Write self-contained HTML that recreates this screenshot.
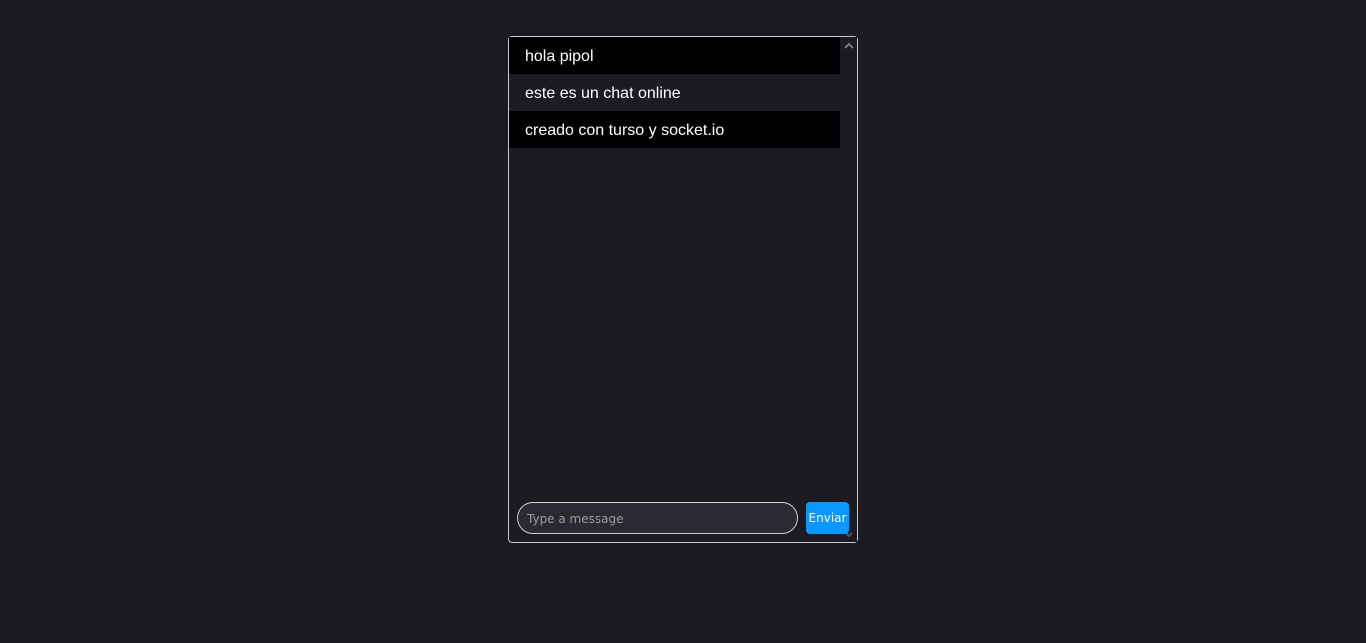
<!DOCTYPE html>
<html><head><meta charset="utf-8"><style>
html,body{margin:0;height:643px;background:#1c1b22;overflow:hidden;font-family:"Liberation Sans",sans-serif}
.box{position:absolute;left:508px;top:36px;width:350px;height:507px;border:1px solid #c8c8c8;border-radius:4px;box-sizing:border-box}
.msg{position:absolute;left:0;width:331px;height:37px;box-sizing:border-box;padding-left:16px;line-height:39px;color:#fff;font-size:16px}
.b{background:#000}
.sb{position:absolute;right:0;top:0;width:16px;height:505px;background:#1c1b22}
.in{position:absolute;left:517px;top:502px;width:281px;height:32px;box-sizing:border-box;border:1px solid #d0d0d0;border-radius:16px;background:#2b2a33;color:#9a9aa0;font-size:12px;line-height:32px;padding-left:9px;font-family:"DejaVu Sans",sans-serif}
.btn{position:absolute;left:806px;top:502px;width:43px;height:32px;background:#0a97ff;border-radius:4px;color:#fff;font-size:12px;line-height:32px;text-align:center;font-family:"DejaVu Sans",sans-serif}
</style></head><body>
<div class="box">
<div class="msg b" style="top:0">hola pipol</div>
<div class="msg" style="top:37px">este es un chat online</div>
<div class="msg b" style="top:74px">creado con turso y socket.io</div>
<div class="sb"><svg width="16" height="16" style="position:absolute;top:1px"><path d="M4 10 L8 6 L12 10" stroke="#777" stroke-width="2" fill="none"/></svg>
<svg width="16" height="16" style="position:absolute;bottom:0"><path d="M5 7 L8 10 L11 7" stroke="#555" stroke-width="2" fill="none"/></svg></div>
</div>
<div class="in">Type a message</div>
<div class="btn">Enviar</div>
</body></html>
